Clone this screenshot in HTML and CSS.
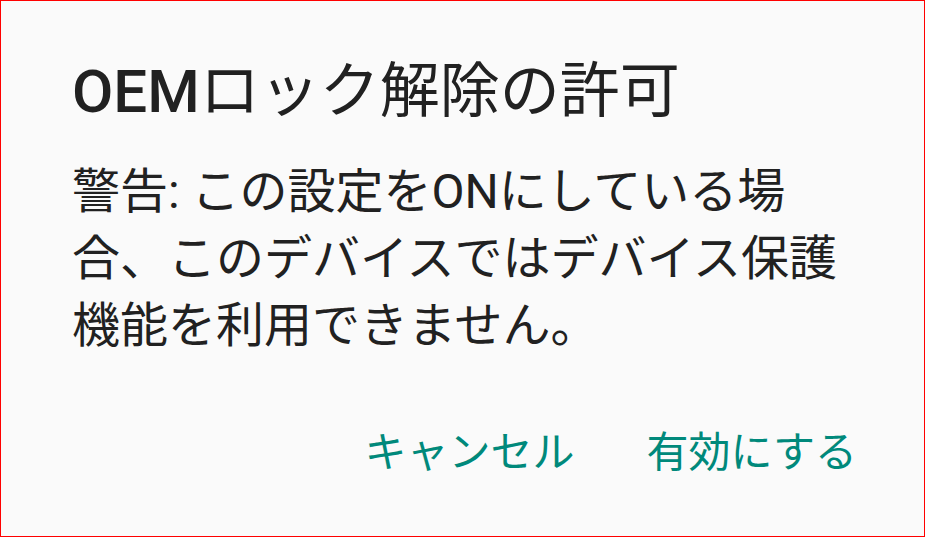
FILE: index.html
```html
<!DOCTYPE html>
<html lang="ja">
<head>
<meta charset="utf-8">
<link rel="stylesheet" href="styles.css">
</head>
<body>
<div class="dialog">
  <h1 class="title">OEM<span class="title-jp">ロック解除の許可</span></h1>
  <p class="message">警告: この設定をONにしている場合、このデバイスではデバイス保護機能を利用できません。</p>
  <div class="actions">
    <span class="btn">キャンセル</span>
    <span class="btn">有効にする</span>
  </div>
</div>
</body>
</html>
```

FILE: styles.css
```css
html, body {
  margin: 0;
  padding: 0;
  background: #fafafa;
}
.dialog {
  box-sizing: border-box;
  width: 925px;
  height: 537px;
  border: 1px solid #ff0000;
  background: #fafafa;
  padding: 0 71px;
  font-family: Roboto, "Noto Sans CJK JP", sans-serif;
  color: #212121;
  display: flex;
  flex-direction: column;
}
.title {
  margin: 56px 0 0 0;
  font-size: 60px;
  font-weight: 500;
  line-height: 70px;
}
.title-jp {
  font-weight: 400;
}
.message {
  margin: 31px 0 0 0;
  font-size: 48px;
  font-weight: 400;
  line-height: 67px;
}
.actions {
  margin-top: 69px;
  margin-right: -4px;
  display: flex;
  justify-content: flex-end;
  gap: 72px;
}
.btn {
  color: #00897b;
  font-size: 42px;
  line-height: 50px;
  font-weight: 400;
}
```
